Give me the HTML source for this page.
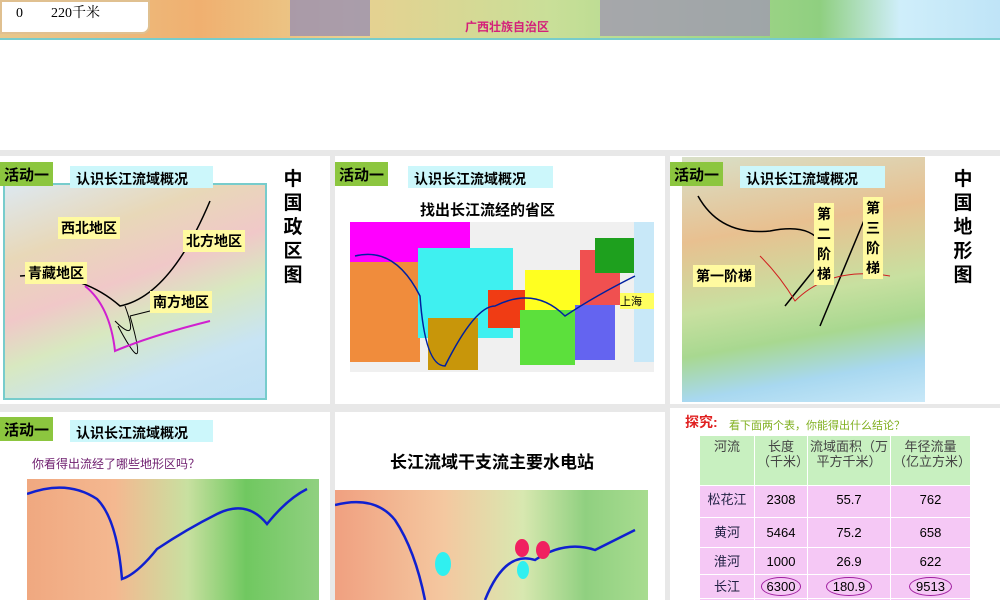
<!DOCTYPE html>
<html><head><meta charset="utf-8"><style>
*{margin:0;padding:0;box-sizing:border-box}
html,body{width:1000px;height:600px;overflow:hidden}
body{background:#fff;font-family:"Liberation Sans","Noto Sans CJK SC",sans-serif;position:relative}
.a{position:absolute}
.p{position:absolute;background:#fff}
.tag{position:absolute;background:#8cc63f;color:#000;font-weight:bold;font-size:15px;padding:2px 4px;height:24px}
.lab{position:absolute;background:#ccf7fb;font-weight:bold;font-size:14px;padding:3px 6px;height:22px}
.y{position:absolute;background:#fffaa0;font-weight:bold;font-size:14px;padding:1px 3px}
.v{position:absolute;font-weight:bold;font-size:19px;line-height:24px;width:20px;text-align:center}
table{border-collapse:collapse;font-size:13px;text-align:center;table-layout:fixed}
td{border:1px solid #fff;line-height:15px;padding:0 2px}
</style></head><body>
<div class="a" style="left:0;top:0;width:1000px;height:38px;background:linear-gradient(90deg,#e7c88c 0%,#f0b070 20%,#e8d090 35%,#c9df98 55%,#a8d88a 70%,#8fcf80 82%,#cfeefa 90%,#bfe4f7 100%)"></div>
<div class="a" style="left:0;top:0;width:150px;height:34px;background:#fff;border:2px solid #e0c090;border-radius:0 0 8px 0;font-size:14px;font-family:'Liberation Serif','Noto Serif CJK SC',serif;padding:0 0 0 14px">0&nbsp;&nbsp;&nbsp;&nbsp;&nbsp;&nbsp;&nbsp;&nbsp;220千米</div>
<div class="a" style="left:290px;top:0;width:80px;height:36px;background:#9a90b0;opacity:.8"></div>
<div class="a" style="left:600px;top:0;width:170px;height:36px;background:#a09ab0;opacity:.8"></div>
<div class="a" style="left:465px;top:18px;font-size:12px;color:#d4207a;font-weight:bold">广西壮族自治区</div>
<div class="a" style="left:0;top:38px;width:1000px;height:2px;background:#7cc"></div>
<div class="a" style="left:0;top:150px;width:1000px;height:450px;background:#e8e8e8"></div>

<div class="p" style="left:0;top:156px;width:330px;height:248px"></div>
<div class="a" style="left:3px;top:183px;width:264px;height:217px;background:linear-gradient(160deg,#dde8f0 0%,#e8d8b8 25%,#f0c8c8 45%,#d8e8c0 60%,#c8e4f4 80%,#c0e0f5 100%);border:2px solid #7cc"></div>
<svg class="a" style="left:0;top:156px" width="330" height="248"><path d="M20 120 Q80 115 120 150 Q170 140 210 45" stroke="#000" stroke-width="1.5" fill="none"/><path d="M125 150 Q140 190 115 165" stroke="#000" fill="none"/><path d="M130 160 Q150 230 118 170" stroke="#000" fill="none"/><path d="M130 160 L210 140" stroke="#000" fill="none"/><path d="M85 130 Q110 150 115 195 Q150 180 210 165" stroke="#d020d0" stroke-width="2" fill="none"/></svg>
<div class="tag" style="left:0;top:162px">活动一</div>
<div class="lab" style="left:70px;top:166px;width:143px">认识长江流域概况</div>
<div class="y" style="left:58px;top:217px">西北地区</div>
<div class="y" style="left:183px;top:230px">北方地区</div>
<div class="y" style="left:25px;top:262px">青藏地区</div>
<div class="y" style="left:150px;top:291px">南方地区</div>
<div class="v" style="left:283px;top:168px">中国政区图</div>

<div class="p" style="left:335px;top:156px;width:330px;height:248px"></div>
<div class="tag" style="left:335px;top:162px">活动一</div>
<div class="lab" style="left:408px;top:166px;width:145px">认识长江流域概况</div>
<div class="a" style="left:420px;top:199px;font-size:15px;font-weight:bold">找出长江流经的省区</div>
<div class="a" style="left:350px;top:222px;width:304px;height:150px;background:#f0f0f0"></div>
<div class="a" style="left:350px;top:222px;width:120px;height:40px;background:#f0f"></div>
<div class="a" style="left:350px;top:262px;width:70px;height:100px;background:#f08c3c"></div>
<div class="a" style="left:418px;top:248px;width:95px;height:90px;background:#3ff0f0"></div>
<div class="a" style="left:428px;top:318px;width:50px;height:52px;background:#c8960a"></div>
<div class="a" style="left:488px;top:290px;width:38px;height:38px;background:#f03c14"></div>
<div class="a" style="left:525px;top:270px;width:55px;height:40px;background:#ffff20"></div>
<div class="a" style="left:520px;top:310px;width:55px;height:55px;background:#5ce03c"></div>
<div class="a" style="left:575px;top:305px;width:40px;height:55px;background:#6464f0"></div>
<div class="a" style="left:580px;top:250px;width:40px;height:55px;background:#f05050"></div>
<div class="a" style="left:595px;top:238px;width:40px;height:35px;background:#1ea01e"></div>
<div class="a" style="left:634px;top:222px;width:20px;height:140px;background:#c8e8f8"></div>
<div class="a" style="left:620px;top:293px;width:34px;height:16px;background:#ffff60;font-size:11px">上海</div>
<svg class="a" style="left:335px;top:156px" width="330" height="248"><path d="M20 100 Q60 90 85 140 Q90 210 110 210 Q140 150 160 150 Q200 130 230 160 Q260 140 300 120" stroke="#0020a0" stroke-width="1.5" fill="none"/></svg>

<div class="p" style="left:670px;top:156px;width:330px;height:248px"></div>
<div class="a" style="left:682px;top:157px;width:243px;height:245px;background:linear-gradient(170deg,#d8e0c8 0%,#e8c090 30%,#c8e0a0 55%,#a8d890 70%,#a8d8f0 85%,#c8e8f8 100%)"></div>
<svg class="a" style="left:670px;top:156px" width="330" height="248"><path d="M28 40 Q50 80 100 75 Q150 65 155 100 L115 150" stroke="#000" stroke-width="1.5" fill="none"/><path d="M200 50 L150 170" stroke="#000" stroke-width="1.5" fill="none"/><path d="M90 100 Q110 120 125 145 Q160 110 220 120" stroke="#d02020" fill="none"/></svg>
<div class="tag" style="left:670px;top:162px">活动一</div>
<div class="lab" style="left:740px;top:166px;width:145px">认识长江流域概况</div>
<div class="y" style="left:693px;top:265px">第一阶梯</div>
<div class="y" style="left:814px;top:203px;width:20px;line-height:20px">第二阶梯</div>
<div class="y" style="left:863px;top:197px;width:20px;line-height:20px">第三阶梯</div>
<div class="v" style="left:953px;top:168px">中国地形图</div>

<div class="p" style="left:0;top:412px;width:330px;height:188px"></div>
<div class="tag" style="left:0;top:417px">活动一</div>
<div class="lab" style="left:70px;top:420px;width:143px">认识长江流域概况</div>
<div class="a" style="left:32px;top:455px;font-size:12px;color:#702070">你看得出流经了哪些地形区吗？</div>
<div class="a" style="left:27px;top:479px;width:292px;height:121px;background:linear-gradient(90deg,#f0a880 0%,#f4b890 30%,#c8e0a0 55%,#70c860 75%,#90d080 100%)"></div>
<svg class="a" style="left:27px;top:479px" width="292" height="121"><path d="M0 15 Q40 0 70 20 Q90 40 95 100 Q110 95 130 70 Q160 50 190 35 Q220 20 240 45 Q260 20 280 10" stroke="#1020d0" stroke-width="2.5" fill="none"/></svg>

<div class="p" style="left:335px;top:412px;width:330px;height:188px"></div>
<div class="a" style="left:390px;top:448px;font-size:17px;font-weight:bold">长江流域干支流主要水电站</div>
<div class="a" style="left:335px;top:490px;width:313px;height:110px;background:linear-gradient(90deg,#f0a080 0%,#f4c8a0 35%,#d8e8b0 60%,#90d080 80%,#a8dc90 100%)"></div>
<svg class="a" style="left:335px;top:490px" width="313" height="110"><path d="M0 15 Q40 5 60 30 Q80 60 90 110 M150 110 Q170 60 200 70 Q230 50 260 60 Q280 50 300 40" stroke="#1020d0" stroke-width="2.5" fill="none"/><ellipse cx="108" cy="74" rx="8" ry="12" fill="#30f0f0"/><ellipse cx="187" cy="58" rx="7" ry="9" fill="#f02060"/><ellipse cx="208" cy="60" rx="7" ry="9" fill="#f02060"/><ellipse cx="188" cy="80" rx="6" ry="9" fill="#30f0f0"/></svg>

<div class="p" style="left:670px;top:408px;width:330px;height:192px"></div>
<div class="a" style="left:685px;top:412px;font-size:14px;font-weight:bold;color:#e02020">探究:</div>
<div class="a" style="left:729px;top:417px;font-size:11px;color:#80b020">看下面两个表，你能得出什么结论？</div>
<table class="a" style="left:699px;top:435px;width:271px">
<colgroup><col style="width:55px"><col style="width:53px"><col style="width:83px"><col style="width:80px"></colgroup>
<tr style="background:#c8f0c0;color:#444;height:50px;vertical-align:top"><td style="padding-top:3px">河流</td><td style="padding-top:3px">长度（千米）</td><td style="padding-top:3px">流域面积（万平方千米）</td><td style="padding-top:3px">年径流量（亿立方米）</td></tr>
<tr style="background:#f5c8f5;height:32px;vertical-align:top"><td style="color:#224;padding-top:6px">松花江</td><td style="padding-top:6px">2308</td><td style="padding-top:6px">55.7</td><td style="padding-top:6px">762</td></tr>
<tr style="background:#f5c8f5;height:30px"><td style="color:#224">黄河</td><td>5464</td><td>75.2</td><td>658</td></tr>
<tr style="background:#f5c8f5;height:27px"><td style="color:#224">淮河</td><td>1000</td><td>26.9</td><td>622</td></tr>
<tr style="background:#f5c8f5;height:24px"><td style="color:#224">长江</td><td><span style="border:1px solid #a020a0;border-radius:50%;padding:1px 5px">6300</span></td><td><span style="border:1px solid #a020a0;border-radius:50%;padding:1px 6px">180.9</span></td><td><span style="border:1px solid #a020a0;border-radius:50%;padding:1px 6px">9513</span></td></tr>
<tr style="background:#f5c8f5;height:20px"><td></td><td></td><td></td><td></td></tr>
</table>
</body></html>
